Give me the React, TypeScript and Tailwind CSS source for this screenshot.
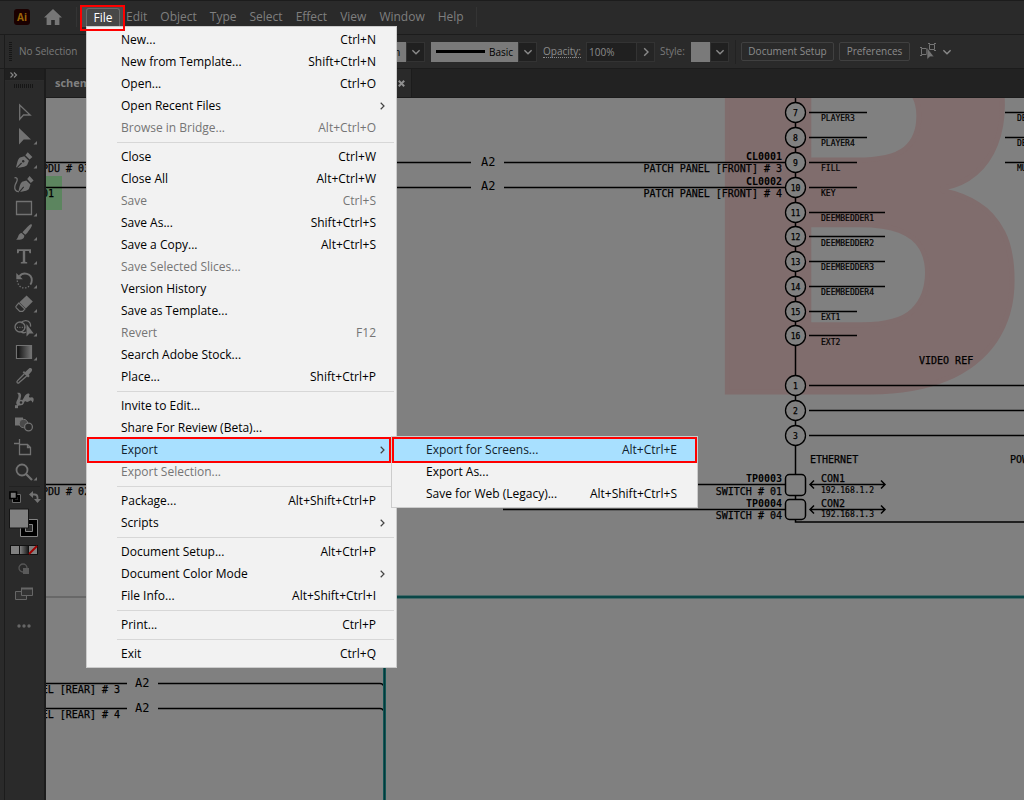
import React from "react";

type Item = { label: string; keys?: string; off?: boolean; sub?: Item[] };

const exportItems: Item[] = [
  { label: "Export for Screens...", keys: "Alt+Ctrl+E" },
  { label: "Export As..." },
  { label: "Save for Web (Legacy)...", keys: "Alt+Shift+Ctrl+S" },
];

const fileMenu: Item[][] = [
  [
    { label: "New...", keys: "Ctrl+N" },
    { label: "New from Template...", keys: "Shift+Ctrl+N" },
    { label: "Open...", keys: "Ctrl+O" },
    { label: "Open Recent Files", sub: [] },
    { label: "Browse in Bridge...", keys: "Alt+Ctrl+O", off: true },
  ],
  [
    { label: "Close", keys: "Ctrl+W" },
    { label: "Close All", keys: "Alt+Ctrl+W" },
    { label: "Save", keys: "Ctrl+S", off: true },
    { label: "Save As...", keys: "Shift+Ctrl+S" },
    { label: "Save a Copy...", keys: "Alt+Ctrl+S" },
    { label: "Save Selected Slices...", off: true },
    { label: "Version History" },
    { label: "Save as Template..." },
    { label: "Revert", keys: "F12", off: true },
    { label: "Search Adobe Stock..." },
    { label: "Place...", keys: "Shift+Ctrl+P" },
  ],
  [
    { label: "Invite to Edit..." },
    { label: "Share For Review (Beta)..." },
    { label: "Export", sub: exportItems },
    { label: "Export Selection...", off: true },
  ],
  [
    { label: "Package...", keys: "Alt+Shift+Ctrl+P" },
    { label: "Scripts", sub: [] },
  ],
  [
    { label: "Document Setup...", keys: "Alt+Ctrl+P" },
    { label: "Document Color Mode", sub: [] },
    { label: "File Info...", keys: "Alt+Shift+Ctrl+I" },
  ],
  [{ label: "Print...", keys: "Ctrl+P" }],
  [{ label: "Exit", keys: "Ctrl+Q" }],
];

function MenuRow({ item, active, nested }: { item: Item; active?: boolean; nested?: boolean }) {
  return (
    <button
      type="button"
      role="menuitem"
      disabled={item.off}
      className={
        "flex h-[22px] w-full items-center justify-between pl-8 text-left " +
        (active && !nested ? "pr-1 " : item.sub ? "pr-[9px] " : "pr-[18px] ") +
        (active ? "bg-[#a8e0ff] text-[#10202c] outline-2 outline-[#ff0000] " : item.off ? "text-[#757575] " : "text-black ")
      }
    >
      <span>{item.label}</span>
      {item.keys && <span>{item.keys}</span>}
      {item.sub && (
        <svg width="5" height="8" viewBox="0 0 5 8" fill="none" stroke="#444" strokeWidth="1.2">
          <path d="M.7.8 4 4 .7 7.2" />
        </svg>
      )}
    </button>
  );
}

function FileMenu() {
  return (
    <div
      role="menu"
      aria-label="File"
      className="absolute top-full left-0 z-20 w-[311px] border border-[#cccccc] bg-[#f2f2f2] p-0.5 text-[12px] leading-4"
    >
      {fileMenu.map((group, i) => (
        <div key={i} className={i ? "relative pt-[7px]" : ""}>
          {i > 0 && <hr className="absolute top-[3px] right-0 left-7 border-[#d7d7d7]" />}
          {group.map((item) =>
            item.label === "Export" ? (
              <div key={item.label} className="relative mr-[5px]">
                <MenuRow item={item} active />
                <div
                  role="menu"
                  aria-label="Export"
                  className="absolute -top-[3px] left-[302px] z-30 w-[307px] border border-[#cccccc] bg-[#f2f2f2] p-0.5"
                >
                  {exportItems.map((s, n) => (
                    <MenuRow key={s.label} item={s} active={n === 0} nested />
                  ))}
                </div>
              </div>
            ) : (
              <MenuRow key={item.label} item={item} />
            ),
          )}
        </div>
      ))}
    </div>
  );
}

function MenuBar() {
  return (
    <header className="flex h-[34px] items-center bg-[#2a2a2a] pl-[14px] shadow-[inset_0_1px_0_#1c1c1c]">
      <div className="flex h-4 w-4 items-center justify-center rounded-[3px] bg-[#1a0000] text-[10px] leading-none font-bold text-[#9a6508]">
        Ai
      </div>
      <button type="button" aria-label="Home" className="ml-[14px]">
        <svg width="18" height="16" viewBox="0 0 18 16" fill="#767676">
          <path d="M9 0 18 8.6h-2.6V16h-4.600v-5H7.200v5H2.600V8.600H0z" />
        </svg>
      </button>
      <div className="ml-[14px] h-5 w-px bg-[#343434]" />
      <nav className="flex items-center text-[12px] leading-4">
        <div className="relative ml-[9px] flex h-[18px] w-[34px] items-stretch">
          <div className="absolute -top-[3px] -left-[6px] h-[22px] w-[45px] bg-[#4c4c4c]" />
          <button
            type="button"
            aria-haspopup="menu"
            aria-expanded="true"
            className="relative w-full rounded-t-[3px] border border-b-0 border-[#6a6a6a] bg-[#474747] text-center leading-4 text-white"
          >
            File
          </button>
          <FileMenu />
          <div className="pointer-events-none absolute -top-[3px] -left-[6px] z-40 h-[26px] w-[45px] border-2 border-[#ff0000]" />
        </div>
        <div className="ml-[6px] flex gap-[13px] text-[#7f7f7f]">
          {["Edit", "Object", "Type", "Select", "Effect", "View", "Window", "Help"].map((m) => (
            <button key={m} type="button">
              {m}
            </button>
          ))}
        </div>
      </nav>
      <div className="ml-3 h-5 w-px bg-[#343434]" />
    </header>
  );
}

function Chevron({ right }: { right?: boolean }) {
  return (
    <svg width="10" height="10" viewBox="0 0 10 10" fill="none" stroke="#8a8a8a" strokeWidth="1.4" className="pointer-events-none shrink-0">
      <path d={right ? "M3.2 1.2 7 5 3.2 8.8" : "M1.4 3.2 5 6.8 8.6 3.2"} />
    </svg>
  );
}

function Dropdown({ name }: { name: string }) {
  return (
    <button type="button" aria-label={name} className="flex h-[20px] w-[19px] shrink-0 items-center justify-center border border-[#333] bg-[#202020]">
      <Chevron />
    </button>
  );
}

const outlined = "flex h-[19px] items-center justify-center rounded-[2px] border border-[#404040] text-[10px] text-[#8c8c8c]";

function ControlBar() {
  return (
    <div className="flex h-[34px] items-center border-t border-[#1c1c1c] bg-[#2a2a2a] text-[10px] text-[#7a7a7a]">
      <div className="ml-1 h-full w-px bg-[#1c1c1c]" />
      <svg width="3" height="20" className="ml-1" stroke="#161616" strokeWidth="3" strokeDasharray="1 1">
        <path d="M1.5 0V20" />
      </svg>
      <span className="ml-[7px] w-[290px] shrink-0">No Selection</span>
      <div className="ml-1 flex w-[112px] shrink-0">
        <div className="flex h-[20px] flex-1 items-center justify-end bg-[#7a7a7a] pr-[3px] text-black">
          <select aria-label="Variable width profile" className="h-4 w-3 appearance-none bg-transparent text-[10px] leading-4 outline-none">
            <option>m</option>
          </select>
        </div>
        <Dropdown name="Open profile list" />
      </div>
      <div className="ml-[6px] flex h-[20px] w-[87px] shrink-0 items-center bg-[#7a7a7a] pl-[5px] text-black">
        <svg width="49" height="3" className="shrink-0">
          <rect width="49" height="3" />
        </svg>
        <select aria-label="Brush" className="ml-1 h-4 w-[28px] appearance-none bg-transparent text-[10px] leading-4 outline-none">
          <option>Basic</option>
        </select>
      </div>
      <Dropdown name="Open brush list" />
      <label htmlFor="opacity" className="ml-[6px] w-[38px] shrink-0 border-b border-dotted border-[#8a8a8a] leading-3 text-[#8c8c8c]">
        Opacity:
      </label>
      <input id="opacity" defaultValue="100%" className="ml-[5px] h-[20px] w-[51px] shrink-0 border border-[#333] bg-[#202020] px-[2px] text-[10px] text-[#8c8c8c] outline-none" />
      <button type="button" aria-label="Opacity slider" className="flex h-[20px] w-[18px] shrink-0 items-center justify-center border border-l-0 border-[#333] bg-[#252525]">
        <Chevron right />
      </button>
      <span className="ml-[5px] w-[31px] shrink-0">Style:</span>
      <button type="button" aria-label="Graphic style" className="h-[20px] w-[19px] shrink-0 bg-[#7a7a7a]" />
      <Dropdown name="Open style list" />
      <div className="ml-[6px] h-6 w-px bg-[#222]" />
      <button type="button" className={outlined + " ml-[5px] w-[93px] shrink-0"}>
        Document Setup
      </button>
      <button type="button" className={outlined + " ml-[5px] w-[71px] shrink-0"}>
        Preferences
      </button>
      <button type="button" aria-label="Select similar objects" className="ml-[10px] flex shrink-0 items-center gap-[5px]">
        <svg width="17" height="17" viewBox="0 0 17 17" fill="none" stroke="#747474">
          <path d="M1.5 5.500h5v6h-5zM9.500 1.500h5v5h-5zM0 4.500h2M0 12.500h2M8 .5h2M14 .5h2M14 7.500h2" />
          <path d="M7 4.500v12l3-2.800h4z" fill="#747474" stroke="#2a2a2a" strokeWidth=".6" />
        </svg>
        <Chevron />
      </button>
    </div>
  );
}

const S = { fill: "none", stroke: "#727272", strokeWidth: 1.3 } as const;
const F = { fill: "#727272" } as const;

/* Each drawing sits in a 30 x 24 cell centred on (15, 12). */
const tools: { name: string; more?: boolean; art: React.ReactNode }[] = [
  { name: "Selection", art: <path {...S} d="M10.700 5v14.200l3.800-4.200h6.700z" /> },
  { name: "Direct Selection", more: true, art: <path {...F} d="M10 4v16.600l4.700-5H22z" /> },
  {
    name: "Pen",
    more: true,
    art: (
      <>
        <path {...F} d="M7 19.300c1.300-4 1.500-8 4-9.700l4.300-1.300 4.600 4.400-1.700 4.400c-2 2.400-6.200 1.900-9.800 3L13 15.400l-.8-.8-4.400 4.700zM16.300 7.200l2.400-3 4.700 4.700-2.800 2.600z" />
        <circle cx="14.200" cy="13.300" r="1.200" fill="#2a2a2a" />
      </>
    ),
  },
  {
    name: "Curvature",
    art: (
      <>
        <path {...F} d="M9.500 19.300c1-4 1.200-7.700 3.600-9.500l4.200-1.300 4.200 4.100-1.600 4.300c-2 2.300-5.600 1.900-8.800 3l4-4.600-.8-.7-4 4.700zM18.200 7l2.400-3 4 4.600-2.800 2.500z" />
        <path {...S} d="M5.500 5.800c3-.8 3.300 2 2 4.300-1.500 2.600-2.600 5.300-1.200 7.800.9 1.600 2.200 1.900 3.600 1.700" />
      </>
    ),
  },
  { name: "Rectangle", more: true, art: <path {...S} fill="#333" d="M7.500 5.500h15v13h-15z" /> },
  {
    name: "Paintbrush",
    more: true,
    art: <path {...F} d="M22.500 4.300c1.300 1-.4 3.600-4.300 8.600l-2 1.900-2.700-2.600 2-2.200c4.200-4.500 6-6.500 7-5.700zM12.700 13l2.600 2.600c.2 3.700-3.800 4.800-8.300 4 2.800-1.500 1.800-6.300 5.700-6.600z" />,
  },
  { name: "Type", more: true, art: <path {...F} d="M8 5.200h14v4h-1.500l-.7-2.300h-3.600v10.800l2 .6V19.500h-6.400v-1.200l2-.6V6.900h-3.600l-.7 2.300H8z" /> },
  {
    name: "Rotate",
    more: true,
    art: (
      <>
        <path {...S} strokeWidth="1.900" d="M10.400 8.400C14 3.600 22.800 5 22.800 12.200c0 1.800-.6 3.200-1.500 4.400" />
        <path {...S} strokeDasharray="1.300 1.700" d="M8.300 12.500c.5 8 9 9.800 13 4.400" />
        <path {...F} d="M7.300 5v6.200h6.500z" />
      </>
    ),
  },
  {
    name: "Eraser",
    more: true,
    art: (
      <>
        <path {...F} d="m17.600 3.600 6.200 6-7 6.900-6.400-6.200z" />
        <path {...S} strokeWidth="1.200" d="m9.700 11 6.200 6-2.200 2.400h-2.900l-3.500-3.600c-.5-.6-.5-1.500 0-2z" />
      </>
    ),
  },
  {
    name: "Shape Builder",
    more: true,
    art: (
      <>
        <circle {...S} cx="11" cy="11" r="5" />
        <path {...S} d="M12 7c2.500-3.500 7.500-3 9 0 .6 1.200.7 2.300.5 3.600M12 15.500c1.600 1.600 3.500 1.500 5 .5" />
        <path {...S} strokeDasharray="1 1.400" d="M8 11.400h9" />
        <path {...F} d="M17.500 8v12.500l3-3h4.200z" />
      </>
    ),
  },
  { name: "Gradient", more: true, art: <path fill="url(#ramp)" stroke="#727272" strokeWidth="1.200" d="M7.500 5.500h15v13h-15z" /> },
  {
    name: "Eyedropper",
    art: (
      <>
        <path {...F} d="M16 8.200 20 4.600c1.700-1.600 4.200.8 2.700 2.600l-3 3.600 1 1.300-1.600 1.500L13.600 8.300l1.500-1.200z" />
        <path {...S} d="M15.400 9.700 8.600 16.600c-1.500 1.600-.2 3.300 1.600 2L17.700 12" />
      </>
    ),
  },
  {
    name: "Puppet Warp",
    art: (
      <>
        <path {...F} d="M8 5c3.200-1 5 1.300 3.700 4.800L11 13c1.800.6 3-1.600 4.200-4 1.400-2.800 3.800-4.200 5.200-2.900.9 1-.8 2-.4 3 .6 1.300 3.200-1 4.300.9.9 1.600.1 4.300-1 4.600-.4-1.900-1.200-2.600-2.300-1.800-2 1.600-3.900 1.300-5 .3-1.500 3-4.200 5.600-7.500 4-1.900-1-1.400-3.500 0-5.700C9.700 9 10.200 6.200 8 5z" />
        <circle cx="12" cy="14.500" r="2" {...S} fill="#2a2a2a" />
        <path {...S} d="M8 18 10.500 15.800" />
        <path {...F} d="M6 17.200h3v3H6z" />
      </>
    ),
  },
  {
    name: "Blend",
    art: (
      <>
        <path {...F} d="M6 5.500h8v8H6z" />
        <circle cx="14.500" cy="11.500" r="4.200" fill="#4a4a4a" stroke="#727272" />
        <circle cx="19.500" cy="15" r="3.900" fill="#2a2a2a" stroke="#727272" strokeWidth="1.300" />
      </>
    ),
  },
  { name: "Artboard", art: <path {...S} d="M10.500 3v6.500M5 7.500h5M10.500 8.500h8l3 3v7h-11zM18.500 8.500v3h3" /> },
  {
    name: "Zoom",
    more: true,
    art: (
      <>
        <circle {...S} strokeWidth="1.800" cx="13" cy="10" r="5.500" />
        <path {...S} strokeWidth="2.300" d="m17 14 6 6" />
      </>
    ),
  },
];

function Toolbox() {
  return (
    <aside aria-label="Tools" className="flex w-[46px] shrink-0 flex-col border-t border-r-2 border-[#1c1c1c] bg-[#2a2a2a] pl-1">
      <div className="flex flex-1 flex-col border-l border-[#1c1c1c]">
        <button type="button" aria-label="Expand panel" className="flex h-3 items-center border-b border-[#2c2c2c] bg-[#202020] pl-[5px]">
          <svg width="8" height="6" fill="none" stroke="#858585" strokeWidth="1.200">
            <path d="m.5.500 2.500 2.500L.5 5.500M4 .5 6.500 3 4 5.500" />
          </svg>
        </button>
        <svg width="20" height="19" className="ml-[9px]" stroke="#161616" strokeWidth="4" strokeDasharray="1 1">
          <path d="M0 5h20" />
        </svg>
        <div className="ml-1 flex flex-col">
          {tools.map((t) => (
            <button key={t.name} type="button" aria-label={t.name} className="h-6 w-[30px]">
              <svg width="30" height="24" viewBox="0 0 30 24">
                {t.name === "Gradient" && (
                  <defs>
                    <linearGradient id="ramp">
                      <stop offset="0" stopColor="#0c0c0c" />
                      <stop offset="1" stopColor="#777" />
                    </linearGradient>
                  </defs>
                )}
                {t.art}
                {t.more && <path {...F} d="M28 17v3.500h-3.500z" />}
              </svg>
            </button>
          ))}
        </div>
        <hr className="mx-1 mt-0.5 border-[#222]" />
        <div className="mt-1 ml-[4px] flex h-3 items-center justify-between pr-[3px]">
          <button type="button" aria-label="Default fill and stroke">
            <svg width="12" height="12">
              <path d="M4.500 4.500h6v6h-6z" fill="none" stroke="#000" strokeWidth="3" />
              <path d="M3.500 3.500h8v8h-8z" fill="none" stroke="#858585" strokeWidth=".8" />
              <path d="M1 1h6.500v6.500H1z" fill="#777" stroke="#000" strokeWidth="1.600" />
            </svg>
          </button>
          <button type="button" aria-label="Swap fill and stroke">
            <svg width="12" height="12" fill="none" stroke="#727272" strokeWidth="1.800">
              <path d="M3 3.500h2.500c2 0 3 1 3 3V9" />
              <path d="M0 3.500 4 0v7zM5 8h7l-3.500 4z" fill="#727272" stroke="none" />
            </svg>
          </button>
        </div>
        <button type="button" aria-label="Fill and stroke" className="mt-[5px] ml-1 w-[30px]">
          <svg width="30" height="31">
            <path d="M11.500 11.500h17v17h-17z" fill="#000" stroke="#858585" />
            <path d="M16.500 16.500h7v7h-7z" fill="#2a2a2a" stroke="#858585" />
            <path d="M.5 1h19v19H.5z" fill="#808080" stroke="#161616" />
          </svg>
        </button>
        <button type="button" aria-label="Colour mode" className="mt-[6px] ml-[5px] w-[28px]">
          <svg width="28" height="10">
            <rect width="28" height="10" fill="#111" />
            <path d="M1 1h8v8H1z" fill="#808080" />
            <path d="M10 1h8v8h-8z" fill="url(#ramp2)" />
            <path d="M19 1h8v8h-8z" fill="#808080" />
            <path d="m19 9 8-8" stroke="#a00000" strokeWidth="2" />
            <linearGradient id="ramp2">
              <stop offset="0" stopColor="#808080" />
              <stop offset="1" stopColor="#1c1c1c" />
            </linearGradient>
          </svg>
        </button>
        <button type="button" aria-label="Drawing mode" className="mt-2 ml-[13px] w-3">
          <svg width="12" height="12">
            <circle cx="5" cy="5" r="4" fill="none" stroke="#555" strokeWidth="1.300" />
            <path d="M5 5h6v6H5z" fill="#5a5a5a" />
          </svg>
        </button>
        <button type="button" aria-label="Screen mode" className="mt-3 ml-[10px] w-[18px]">
          <svg width="18" height="14" fill="#333" stroke="#666">
            <path d="M.5 4.500h11v8H.5z" />
            <path d="M6.500 1.500h11v7h-11z" />
            <path d="M6 1.500h12" strokeWidth="2" />
          </svg>
        </button>
        <button type="button" aria-label="Edit toolbar" className="mt-[23px] ml-3 w-[14px]">
          <svg width="14" height="4" fill="#666">
            <circle cx="2" cy="2" r="1.700" />
            <circle cx="7" cy="2" r="1.700" />
            <circle cx="12" cy="2" r="1.700" />
          </svg>
        </button>
      </div>
    </aside>
  );
}

const ports: [number, string, number, string, number][] = [
  [112, "7", 867, "PLAYER3", 120],
  [137, "8", 867, "PLAYER4", 145],
  [162, "9", 857, "FILL", 170],
  [187, "10", 857, "KEY", 195],
  [212, "11", 885, "DEEMBEDDER1", 220],
  [236, "12", 885, "DEEMBEDDER2", 245],
  [261, "13", 885, "DEEMBEDDER3", 269],
  [286, "14", 885, "DEEMBEDDER4", 294],
  [311, "15", 857, "EXT1", 319],
  [335, "16", 857, "EXT2", 344],
  [385, "1", 1024, "", 0],
  [410, "2", 1024, "", 0],
  [435, "3", 1024, "", 0],
];

function Canvas() {
  return (
    <svg className="block w-full flex-1 bg-[#808080] [font-family:'DejaVu_Sans_Mono','Liberation_Mono',monospace]" role="img" aria-label="Wiring schematic">
      <g transform="translate(-46 -98)" fontSize="10">
        <text x="679" y="392" fontSize="538" fontWeight="700" fill="#806d6d" stroke="#806d6d" strokeWidth="5" className="[font-family:'Open_Sans',sans-serif]">
          B
        </text>
        <rect x="46" y="176" width="16" height="34" fill="#5c855f" />
        <g fill="none" stroke="#000" strokeWidth="1.500">
          <path d="M46 162.500h425M504 162.500h281M46 187.500h425M504 187.500h281M46 484.500h739M503 509.500h282M46 683.500h81M46 708.500h81M158 683.500h222q3 0 4 3M158 708.500h222q3 0 4 3" />
          <path d="M795.500 98v377M795.500 495v27h229M1005 112.500h19M1005 137.500h19M1005 162.500h19" />
          <path d="M810 484.500h75M810 509.500h75M814 480.500l-4 4 4 4M881 480.500l4 4-4 4M814 505.500l-4 4 4 4M881 505.500l4 4-4 4" />
        </g>
        <path d="M46 597h40" stroke="#686868" strokeWidth="2" />
        <path d="M397 597h627M384.500 668v600" stroke="#155555" strokeWidth="3" />
        <path d="M397 597h627M384.500 668v600" stroke="#003b3b" />
        {ports.map(([y, n, end, label, base]) => (
          <g key={n + label}>
            <path d={`M809 ${y + 0.5}H${end}`} stroke="#000" strokeWidth="1.500" />
            <circle cx="795.500" cy={y + 0.5} r="10" fill="#808080" stroke="#000" strokeWidth="1.300" />
            <text x="795.500" y={y + 3.5} fontSize="8" stroke="#000" strokeWidth=".25" textAnchor="middle">
              {n}
            </text>
            {label && (
              <text x="821" y={base + 1} fontSize="8" stroke="#000" strokeWidth=".2">
                {label}
              </text>
            )}
          </g>
        ))}
        <g fill="#808080" stroke="#000" strokeWidth="1.500">
          <rect x="785.500" y="474.500" width="20" height="21" rx="4" />
          <rect x="785.500" y="499.500" width="20" height="20" rx="4" />
        </g>
        <g stroke="#000" strokeWidth=".25">
          <text x="42" y="172">PDU # 03</text>
          <text x="42" y="197">01</text>
          <text x="42" y="495">PDU # 02</text>
          <g textAnchor="end">
            <text x="120" y="693">PANEL [REAR] # 3</text>
            <text x="120" y="718">PANEL [REAR] # 4</text>
            <text x="782" y="172">PATCH PANEL [FRONT] # 3</text>
            <text x="782" y="197">PATCH PANEL [FRONT] # 4</text>
            <text x="782" y="495">SWITCH # 01</text>
            <text x="782" y="519">SWITCH # 04</text>
          </g>
          <text x="919" y="364">VIDEO REF</text>
          <text x="810" y="463">ETHERNET</text>
          <text x="1010" y="463">POWER</text>
          <text x="821" y="482">CON1</text>
          <text x="821" y="507">CON2</text>
        </g>
        <g fontWeight="700" textAnchor="end">
          <text x="782" y="160">CL0001</text>
          <text x="782" y="185">CL0002</text>
          <text x="782" y="482">TP0003</text>
          <text x="782" y="507">TP0004</text>
        </g>
        <g fontSize="12">
          <text x="481" y="166">A2</text>
          <text x="481" y="190">A2</text>
          <text x="135" y="687">A2</text>
          <text x="135" y="712">A2</text>
        </g>
        <g fontSize="8" stroke="#000" strokeWidth=".2">
          <text x="821" y="493">192.168.1.2</text>
          <text x="821" y="517">192.168.1.3</text>
          <text x="1017" y="121">DE</text>
          <text x="1017" y="146">DE</text>
          <text x="1017" y="171">MU</text>
        </g>
      </g>
    </svg>
  );
}

export default function App() {
  return (
    <div className="flex min-h-screen flex-col overflow-hidden bg-[#222222] [font-family:'Open_Sans','Noto_Sans',sans-serif]">
      <MenuBar />
      <ControlBar />
      <div className="flex flex-1">
        <Toolbox />
        <main className="flex min-w-0 flex-1 flex-col">
          <div className="flex h-[30px] border-y border-[#1c1c1c] bg-[#222222]">
            <div className="flex w-[366px] items-center justify-between border-r border-[#1c1c1c] bg-[#2a2a2a] pr-[6px] pl-[9px] text-[11px] font-bold text-[#808080]">
              <span>schem</span>
              <button type="button" aria-label="Close document">
                <svg width="7" height="7" stroke="#909090" strokeWidth="2">
                  <path d="m.8.800 5.400 5.400M6.200.8.800 6.200" />
                </svg>
              </button>
            </div>
          </div>
          <Canvas />
        </main>
      </div>
    </div>
  );
}
